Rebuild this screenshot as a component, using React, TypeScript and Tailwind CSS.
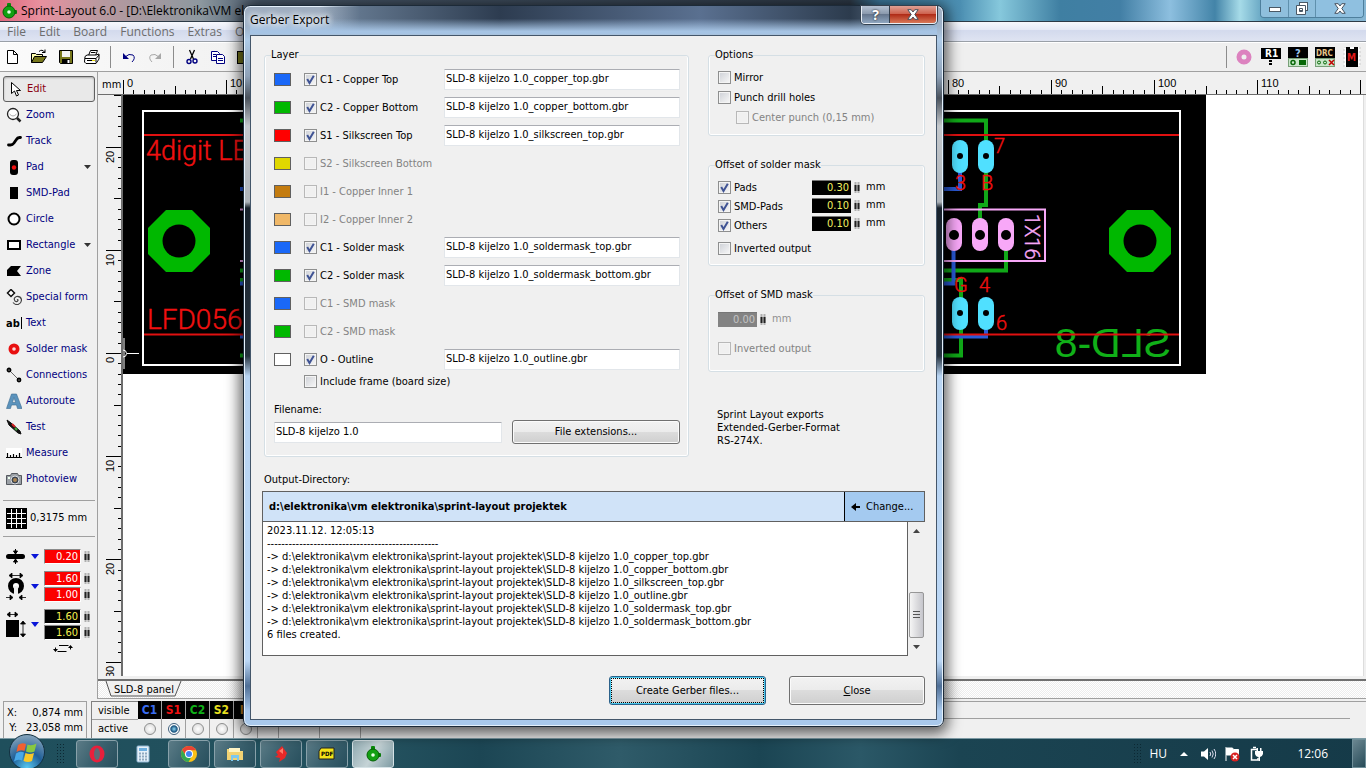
import type { ReactNode } from "react";

const UI = "font-['DejaVu_Sans_Condensed','DejaVu_Sans',sans-serif]";
const SEGOE = "font-['Open_Sans','Noto_Sans',sans-serif]";

function Icon({ children, size = 16, className = "" }: { children: ReactNode; size?: number; className?: string }) {
  return (
    <svg width={size} height={size} viewBox={`0 0 ${size} ${size}`} className={`shrink-0 ${className}`} aria-hidden="true">
      {children}
    </svg>
  );
}

function AppLogo() {
  return (
    <Icon>
      <rect x="6" y="0" width="4" height="5" rx="1" fill="#0a8a0a" />
      <rect x="11" y="7" width="5" height="4" rx="1" fill="#0a7a0a" />
      <circle cx="8" cy="9" r="6" fill="#12a012" stroke="#056105" />
      <circle cx="8" cy="9" r="1.8" fill="#e8ffe8" />
    </Icon>
  );
}

function TitleBar() {
  return (
    <header className="flex h-[22px] shrink-0 justify-between border-b border-[#2c3a46] bg-[linear-gradient(90deg,#e06a80_0,#e8909e_40px,#b9999f_100px,#8d989f_200px,#48586a_260px,#2e3a48_850px,#3c7a9e_880px,#4c8fb2_960px,#86c8dc_1000px,#3f7fa2_1060px,#427fa5_1120px,#8dbfdf_1170px,#4384a8_1215px,#a6dbe8_1240px,#5f9fbe_1265px,#86b6d3_1366px)]">
      <div className="flex items-center gap-1 pl-[1px]">
        <AppLogo />
        <h1 className={`text-[12px] leading-[18px] text-black ${SEGOE}`}>Sprint-Layout 6.0 - [D:\Elektronika\VM elektronika</h1>
      </div>
      <div className="mr-[2px] flex h-[18px] overflow-hidden rounded-b-[4px] border border-t-0 border-[#4e7f9d]">
        <button aria-label="Minimize" className="grid w-[28px] place-items-center border-r border-[#5f90ad] bg-[#8fbfdd]">
          <svg width="12" height="6"><rect x=".5" y="1.500" width="11" height="4" fill="#fff" stroke="#4a5865" /></svg>
        </button>
        <button aria-label="Restore" className="grid w-[27px] place-items-center border-r border-[#5f90ad] bg-[#8fbfdd]">
          <svg width="13" height="13" fill="#fff" stroke="#4a5865">
            <rect x="3.500" y=".5" width="8" height="8" />
            <path fillRule="evenodd" d="M.5 3.500h9v9h-9zM3.500 6.500v3h3v-3z" />
          </svg>
        </button>
        <button aria-label="Close window" className="grid w-[47px] place-items-center bg-[#8fc0e0]">
          <CrossGlyph />
        </button>
      </div>
    </header>
  );
}

function CrossGlyph() {
  return (
    <svg width="12" height="11" viewBox="0 0 12 11">
      <path d="M.8.700h3.400L6 3 7.800.700h3.400L7.800 5.500l3.400 4.800H7.800L6 8l-1.800 2.300H.8l3.400-4.800z" fill="#fff" stroke="#48525e" />
    </svg>
  );
}

function MenuBar() {
  return (
    <nav className={`flex h-[20px] shrink-0 items-center gap-[13px] border-b border-[#9aa0a8] bg-[linear-gradient(#f6f8fc,#e6eaf6_40%,#d3daed_45%,#dfe4f2)] pl-[7px] text-[12px] leading-4 text-[#6d6d6d] ${SEGOE}`}>
      {["File", "Edit", "Board", "Functions", "Extras", "Options", "Help"].map((m) => (
        <button key={m}>{m}</button>
      ))}
    </nav>
  );
}

function Toolbar() {
  return (
    <div className="flex h-[30px] shrink-0 items-center justify-between border-t border-b border-t-white border-b-[#a0a0a0] bg-[linear-gradient(90deg,#fbfbfb,#efefef_300px)] pr-[4px] pl-1">
      <div className="flex items-center gap-[10px]">
        <button aria-label="New"><Icon><path d="M3.500 1.500h6l4 4v9h-10zM9.500 1.500v4h4" fill="#fff" stroke="#000" /></Icon></button>
        <button aria-label="Open">
          <Icon size={18}><path d="M1.500 14.500v-9h4l1 1h6v2" fill="#ffffb0" stroke="#000" /><path d="M1.500 14.500l3-6h12l-4 6z" fill="#77771c" stroke="#000" /><path d="M9 3.500q3-3 6 1m0-3v3h-3" fill="none" stroke="#000" /></Icon>
        </button>
        <button aria-label="Save">
          <Icon><path d="M1.500 1.500h13v13h-12l-1-1z" fill="#77771c" stroke="#000" /><path d="M4 2h8v6H4z" fill="#f2f2f2" /><path d="M4 10h8v4H4z" fill="#000" /><path d="M9.500 11h2v3h-2z" fill="#fff" /></Icon>
        </button>
        <button aria-label="Print">
          <Icon><path d="M4.500 6.500l2-5h7l-2 5z" fill="#fff" stroke="#000" /><path d="M1 7.500l2-1.500h9l3-1v5l-3 4.500H2l-1.500-1.500z" fill="#fff" stroke="#000" /><path d="M1 9.500h11v4M12 9.500l3-3.500M7 3.500h4.500M3 11.500h8" fill="none" stroke="#000" /><path d="M8 11.500h3" stroke="#e4d60a" /></Icon>
        </button>
        <span className="h-[22px] w-px bg-[#8c8c8c]" />
        <button aria-label="Undo"><Icon><path d="M2 4v6h6z" fill="#000080" /><path d="M4 8q4-4 8-2 3 3-1 7" fill="none" stroke="#000080" /></Icon></button>
        <button aria-label="Redo"><Icon><path d="M14 4v6H8z" fill="#a8a8a8" /><path d="M12 8Q8 4 4 6q-3 3 1 7" fill="none" stroke="#a8a8a8" /></Icon></button>
        <span className="h-[22px] w-px bg-[#8c8c8c]" />
        <button aria-label="Cut"><Icon><path d="M5.500 1l4 9M10.500 1l-4 9" stroke="#000" strokeWidth="1.300" /><circle cx="5" cy="12.500" r="2" fill="none" stroke="#000080" strokeWidth="1.400" /><circle cx="11" cy="12" r="2" fill="none" stroke="#000080" strokeWidth="1.400" /></Icon></button>
        <button aria-label="Copy"><Icon><path d="M1.500 2.500h6l2 2v7h-8z" fill="#fff" stroke="#000080" /><path d="M6.500 5.500h6l2 2v7h-8z" fill="#fff" stroke="#000080" /><path d="M3 5.500h3M3 7.500h3M8 9.500h5M8 11.500h5" stroke="#000080" /></Icon></button>
        <button aria-label="Paste"><Icon><rect x="1.500" y="2.500" width="12" height="12" fill="#77771c" stroke="#000" /></Icon></button>
      </div>
      <div className="flex items-center gap-[7px]">
        <span className="h-[22px] w-px bg-[#8c8c8c]" />
        <button aria-label="Drill"><Icon size={20}><circle cx="10" cy="10" r="5" fill="none" stroke="#dc82bf" strokeWidth="5" /></Icon></button>
        <button aria-label="Component">
          <Icon size={20}><rect y="1" width="20" height="11" fill="#000" /><text x="4" y="10" fontSize="10" fontWeight="700" fontFamily="DejaVu Sans Condensed" fill="#fff">R1</text><path d="M8 13h3v2H8zM8 16h3v2H8z" fill="#000" /></Icon>
        </button>
        <button aria-label="Query">
          <Icon size={20}><rect y="0" width="20" height="11" fill="#000" /><text x="7" y="10" fontSize="11" fontWeight="700" fontFamily="DejaVu Sans Condensed" fill="#9cc8f0">?</text><rect x=".5" y="11.500" width="19" height="8" fill="#c9e6c9" stroke="#78a078" /><circle cx="5" cy="15.500" r="2" fill="none" stroke="#086808" strokeWidth="1.500" /><rect x="11" y="13" width="7" height="5" fill="#086808" /></Icon>
        </button>
        <button aria-label="Design rule check">
          <Icon size={20}><rect y="0" width="20" height="11" fill="#000" /><text x="1" y="9" fontSize="8" fontWeight="700" fontFamily="DejaVu Sans Condensed" fill="#e6c48a">DRC</text><rect x=".5" y="11.500" width="19" height="8" fill="#c9e6c9" stroke="#78a078" /><circle cx="4" cy="15.500" r="1.500" fill="none" stroke="#086808" /><circle cx="10" cy="15.500" r="1.500" fill="none" stroke="#086808" /><path d="M14 13l5 5M19 13l-5 5" stroke="#c00000" strokeWidth="1.500" /></Icon>
        </button>
        <button aria-label="Macro library">
          <Icon size={20}><rect x="2" y="0" width="16" height="20" fill="#fff" stroke="#ccc" strokeDasharray="2 2" /><rect x="4" y="0" width="12" height="20" fill="#000" /><path d="M8 0h4v2H8z" fill="#fff" /><text x="5" y="14" fontSize="10" fontWeight="700" fontFamily="DejaVu Sans Condensed" fill="#e01818">M</text></Icon>
        </button>
      </div>
    </div>
  );
}

const tools: { label: string; icon: ReactNode; menu?: boolean }[] = [
  { label: "Edit", icon: <path d="M4.500 1.500v11l3-2.500 2 5 2-1-2-4.500h4z" fill="#fff" stroke="#000" /> },
  { label: "Zoom", icon: <><circle cx="7" cy="7" r="5.500" fill="#fff" stroke="#222" strokeWidth="1.300" /><path d="M3.500 7q3.500 4 7 0" stroke="#aaa" fill="none" /><path d="M11 11l3.500 3.500" stroke="#222" strokeWidth="2.500" /></> },
  { label: "Track", icon: <path d="M2.500 12h2q2 0 3.500-2l2-3q1.500-2.500 3.500-2.500h1" fill="none" stroke="#000" strokeWidth="2.800" strokeLinecap="round" /> },
  { label: "Pad", icon: <><rect x="4" y="1" width="8" height="15" rx="3" fill="#000" /><circle cx="8" cy="8.500" r="2.200" fill="#f01010" /></>, menu: true },
  { label: "SMD-Pad", icon: <rect x="4" y="2" width="8" height="12" fill="#000" /> },
  { label: "Circle", icon: <circle cx="8" cy="8" r="5.500" fill="#fff" stroke="#000" strokeWidth="2" /> },
  { label: "Rectangle", icon: <rect x="2" y="4" width="12" height="8" fill="#fff" stroke="#000" strokeWidth="2" />, menu: true },
  { label: "Zone", icon: <path d="M1 7l4-4h10l-4 5 4 5H1z" fill="#000" /> },
  { label: "Special form", icon: <><path d="M5 .5l3.500 3.500L5 7.500 1.500 4z" fill="#fff" stroke="#111" strokeWidth="1.500" /><path d="M11 11q1-1 1 .5-1 2-3 .5-2-3 1.500-4.500 4-.5 5 3 0 4-3.500 5-3 .5-5-2" fill="none" stroke="#444" strokeWidth="1.200" /></> },
  { label: "Text", icon: <><text x="0" y="12" fontSize="11" fontWeight="700" fontFamily="DejaVu Sans Condensed">ab</text><path d="M15.500 2v12" stroke="#000" /></> },
  { label: "Solder mask", icon: <><circle cx="8" cy="8" r="5.500" fill="#e81010" /><circle cx="8" cy="8" r="1.800" fill="#ffd8d8" /></> },
  { label: "Connections", icon: <><path d="M3 3l10 10" stroke="#666" /><circle cx="3" cy="3" r="1.500" fill="#fff" stroke="#000" strokeWidth="1.800" /><circle cx="13" cy="13" r="1.500" fill="#fff" stroke="#000" strokeWidth="1.800" /></> },
  { label: "Autoroute", icon: <path fillRule="evenodd" d="M5.500 1h5L16 15.500h-4.500L10.500 12h-5l-1 3.500H.5zM8 4.500L6.500 9.500h3z" fill="#5b93bd" stroke="#3d6c91" strokeWidth=".6" /> },
  { label: "Test", icon: <><path d="M1 1l4 3 9 8 1 3-3-1-9-8z" fill="#111" stroke="#111" /><path d="M6 5l3 3" stroke="#d02020" strokeWidth="2" /><path d="M9 9l2 2" stroke="#40b040" strokeWidth="2" /></> },
  { label: "Measure", icon: <><rect y="3" width="16" height="9" fill="#fff" /><path d="M0 12.500h16M1.500 8v4M4.500 10v2M7.500 9v3M10.500 10v2M13.500 8v4" stroke="#000" strokeWidth="1.200" /></> },
  { label: "Photoview", icon: <><path d="M.5 4.500h4l1-2h6l1 2h3v9H.5z" fill="#9ba0a6" stroke="#55595f" /><circle cx="9" cy="9" r="4" fill="#3c4450" stroke="#d9dde2" /><circle cx="9" cy="9" r="2" fill="#a98553" /><rect x="2" y="6" width="2" height="2" fill="#efe" /></> },
];

function Spinner({ className = "" }: { className?: string }) {
  return (
    <svg width="6" height="11" className={`shrink-0 ${className}`} aria-hidden="true">
      <path d="M1.500 0v11M4.500 0v11" stroke="#b0b0b0" strokeWidth="2" />
      <path d="M1.500 3v6M4.500 3v6" stroke="#222" strokeWidth="2" />
    </svg>
  );
}

function SideValue({ value, label, red }: { value: string; label: string; red?: boolean }) {
  return (
    <div className="flex items-center gap-[3px]">
      <input
        aria-label={label}
        defaultValue={value}
        className={`h-[15px] w-[37px] border border-[#8a8a8a] border-b-white border-r-white pr-[2px] text-right text-[11px] leading-[13px] ${red ? "bg-[#fb0000] text-white" : "bg-black text-[#f4f050]"}`}
      />
      <Spinner />
    </div>
  );
}

function BlueArrow() {
  return <svg width="8" height="5" className="shrink-0"><path d="M0 0h8L4 5z" fill="#0a16d8" /></svg>;
}

function Sidebar() {
  return (
    <aside className={`flex w-[98px] shrink-0 flex-col border-r border-[#a0a0a0] pt-1 pr-[2px] pl-[3px] text-[11px] text-[#000080] ${UI}`}>
      {tools.map((t) => (
        <button
          key={t.label}
          className={`flex h-[26px] items-center gap-1 pl-[3px] whitespace-nowrap ${t.label === "Edit" ? "rounded-[3px] border border-[#606060] bg-[#e9e9e9] pl-[2px] text-[#8b0010] shadow-[inset_0_1px_2px_#aaa]" : ""}`}
        >
          <Icon>{t.icon}</Icon>
          <span className="flex-1 text-left">{t.label}</span>
          {t.menu && <svg width="7" height="4" className="mr-1"><path d="M0 0h7L3.500 4z" fill="#333" /></svg>}
        </button>
      ))}
      <hr className="mt-2 border-[#a0a0a0]" />
      <button className="flex h-[35px] items-center gap-[3px] pl-[3px] whitespace-nowrap text-black">
        <Icon size={21}><rect width="21" height="21" fill="#000" /><path d="M5.500 1v19M10.500 1v19M15.500 1v19M1 5.500h19M1 10.500h19M1 15.500h19" stroke="#fff" /></Icon>
        0,3175 mm
      </button>
      <hr className="border-[#a0a0a0]" />
      <div className="mt-3 flex items-center justify-between pr-[5px] pl-[3px]">
        <svg width="19" height="15"><rect y="5" width="19" height="5" rx="2.500" /><path d="M9.500 0v4M7.500 2h4l-2 3zM9.500 15v-4M7.500 13h4l-2-3z" stroke="#000" /></svg>
        <BlueArrow />
        <SideValue value="0.20" label="Track width" red />
      </div>
      <div className="mt-[7px] flex items-center justify-between pr-[5px] pl-[3px]">
        <svg width="20" height="27">
          <path d="M4 2.500h12M6 0v5L3 2.500zM14 0v5l3-2.500z" stroke="#000" strokeWidth=".8" />
          <circle cx="10" cy="13" r="5.500" fill="#fff" stroke="#000" strokeWidth="5" />
          <path d="M8 13h4v8H8z" fill="#f0f0f0" />
          <path d="M0 24.500h6M20 24.500h-6M4 22v5l3-2.500zM16 22v5l-3-2.500z" stroke="#000" strokeWidth=".8" />
        </svg>
        <BlueArrow />
        <div className="flex flex-col gap-px"><SideValue value="1.60" label="Pad outer" red /><SideValue value="1.00" label="Pad drill" red /></div>
      </div>
      <div className="mt-[7px] flex items-center justify-between pr-[5px] pl-[3px]">
        <svg width="20" height="27">
          <path d="M2 3.500h9M4 1v5L1 3.500zM9 1v5l3-2.500z" stroke="#000" strokeWidth=".8" />
          <rect y="9" width="13" height="17" />
          <path d="M17 11v14M14.500 13h5L17 10zM14.500 23h5L17 26z" stroke="#000" strokeWidth=".8" />
        </svg>
        <BlueArrow />
        <div className="flex flex-col gap-px"><SideValue value="1.60" label="SMD width" /><SideValue value="1.60" label="SMD height" /></div>
      </div>
      <svg width="20" height="9" className="mt-1 ml-[50px]"><path d="M6 1.500h9.500M2.500 7V3.500M4.500 7.500h9M17.500 2v3.500" fill="none" stroke="#000" /><path d="M0 5h5L2.500 8zM15 4h5L17.500 1z" /></svg>
    </aside>
  );
}

const MM = 10.31;

function TopRuler() {
  const count = Math.floor((window.innerWidth - 126) / MM) + 1;
  const ticks = Array.from({ length: count }, (_, i) => i);
  return (
    <svg height="22" className="w-0 min-w-0 flex-1" aria-hidden="true">
      {ticks.map((i) => {
        const x = Math.round(i * MM) + 0.5;
        return <path key={i} d={`M${x} ${i % 10 === 0 ? 8 : i % 5 === 0 ? 14 : 18}V22`} stroke="#000" />;
      })}
      {ticks.filter((i) => i % 10 === 0 && i < count - 2).map((i) => (
        <text key={i} x={Math.round(i * MM) + 4} y="15" fontSize="11" fontFamily="Liberation Sans">{i}</text>
      ))}
    </svg>
  );
}

function LeftRuler() {
  const zero = 258;
  const below = Math.floor((window.innerHeight - 443) / MM);
  const ticks = Array.from({ length: 25 + below }, (_, k) => k - 25);
  return (
    <svg width="25" className="shrink-0 self-stretch" height="100%" aria-hidden="true">
      {ticks.map((i) => {
        const y = Math.round(zero + i * MM) + 0.5;
        return <path key={i} d={`M${i % 10 === 0 ? 8 : i % 5 === 0 ? 16 : 20} ${y}H23`} stroke="#000" />;
      })}
      {ticks.filter((i) => i % 10 === 0).map((i) => (
        <text key={i} transform={`translate(16 ${Math.round(zero + i * MM) + (i === 0 ? 10 : 16)}) rotate(-90)`} fontSize="11" fontFamily="Liberation Sans">{Math.abs(i)}</text>
      ))}
      <path d="M24 0v2000" stroke="#6e6e6e" strokeWidth="2" />
    </svg>
  );
}

function Octagon({ x, y }: { x: number; y: number }) {
  return (
    <>
      <path transform={`translate(${x} ${y})`} d="M-13-31H13L31-13V13L13 31H-13L-31 13V-13z" fill="#00b800" />
      <circle cx={x} cy={y} r="16.500" fill="#000" />
    </>
  );
}

function Board() {
  const cyan = [[960, 156], [986, 156], [960, 313], [986, 313]];
  const marks: [string, number, number][] = [["7", 994, 153], ["3", 955, 190], ["B", 981, 190], ["G", 954, 292], ["4", 979, 292], ["6", 996, 330]];
  return (
    <svg className="block h-[560px] w-full" role="img" aria-label="Printed circuit board layout">
      <g transform="translate(-123 -95)">
        <rect x="123" y="95" width="1083" height="279" fill="#000" />
        <rect x="143" y="111" width="1037" height="254" fill="none" stroke="#fff" strokeWidth="2" />
        <g fill="none" strokeWidth="4">
          <g stroke="#10a818">
            <path d="M240 120.500H986V205H980V235M1006 235v35.500H240M240 280h721V355.500H240" />
          </g>
          <g stroke="#2a5ad8">
            <path d="M960 156v33H240M953.500 235v48.500H240M986 313v23.500H240" />
          </g>
        </g>
        <path d="M240 209.500H1045V261H240" fill="none" stroke="#f8a8f8" strokeWidth="2" />
        {cyan.map(([x, y]) => (
          <g key={`${x}-${y}`}><rect x={x - 8} y={y - 16} width="16" height="33" rx="8" fill="#50e0ff" /><circle cx={x} cy={y} r="3" /></g>
        ))}
        {[954, 980, 1006].map((x) => (
          <g key={x}><rect x={x - 8} y="218" width="16" height="33" rx="8" fill="#f8a8f8" /><circle cx={x} cy="235" r="5" /></g>
        ))}
        <Octagon x={179} y={241} />
        <Octagon x={1140} y={241} />
        <text transform="translate(1171 357) scale(-1 1)" fontFamily="Liberation Sans" fontSize="41" fill="#10b018">SLD-8</text>
        <path d="M144 135h1035M144 334.500h1035" stroke="#e01010" strokeWidth="2" />
        <g fontFamily="Roboto" fontWeight="300" fill="#f01010" stroke="#f01010" strokeWidth=".4" fontSize="20">
          {marks.map(([t, x, y]) => <text key={`${t}${x}`} x={x} y={y}>{t}</text>)}
          <text x="146" y="160" fontSize="27">4digit LED</text>
          <text x="147" y="329" fontSize="28">LFD056</text>
        </g>
        <text transform="translate(1025 214) rotate(90)" fontFamily="Roboto" fontWeight="300" fontSize="20" fill="#f8a8f8" stroke="#f8a8f8" strokeWidth=".4">1X16</text>
        <path d="M124 338v31M127 353.500h12" stroke="#fff" />
        <circle cx="123" cy="353.500" r="3.500" fill="none" stroke="#fff" />
      </g>
    </svg>
  );
}

function Workspace() {
  return (
    <main className="flex min-w-0 flex-1 flex-col">
      <div className="flex h-[23px] shrink-0 overflow-hidden border-b border-[#6e6e6e]">
        <span className={`w-[25px] shrink-0 pt-[6px] pl-1 text-[11px] leading-[13px] ${UI}`}>mm</span>
        <TopRuler />
      </div>
      <div className="flex flex-1">
        <LeftRuler />
        <div className="mr-[2px] min-w-0 flex-1 border-r border-[#ddd] bg-white"><Board /></div>
      </div>
      <div className="mt-[3px] flex h-[20px] shrink-0 border-t-2 border-b border-t-[#707070] border-b-[#a0a0a0] bg-[repeating-conic-gradient(#ffffff_0_25%,#ededed_0_50%)] bg-[length:2px_2px] pl-[7px]">
        <button className={`relative h-[17px] w-[78px] text-[11px] leading-[13px] ${UI}`}>
          <svg width="78" height="17" className="absolute inset-0"><path d="M1 0l5 15h64l6-15" fill="#f0f0f0" stroke="#555" /></svg>
          <span className="relative">SLD-8 panel</span>
        </button>
      </div>
    </main>
  );
}

const layers = [
  ["C1", "text-[#3a6cf0]"], ["S1", "text-[#f01010]"], ["C2", "text-[#10b018]"], ["S2", "text-[#e8e020]"], ["I1", "text-[#c08020]"],
];

function StatusBar() {
  return (
    <footer className={`flex h-[39px] shrink-0 gap-[4px] bg-[#f0f0f0] pt-[2px] pl-[3px] text-[11px] ${UI}`}>
      <dl className="grid w-[84px] grid-cols-[auto_1fr] content-center gap-y-[2px] border border-b-0 border-[#a0a0a0] px-[3px] text-right leading-[13px]">
        <dt>X:</dt><dd>0,874 mm</dd>
        <dt>Y:</dt><dd>23,058 mm</dd>
      </dl>
      <div className="flex min-w-0 flex-1">
        <div className="w-[47px] border-t border-l border-[#808080] leading-[17px]">
          <p className="border-b border-[#a0a0a0] pl-[6px]">visible</p>
          <p className="pl-[6px] leading-[18px]">active</p>
        </div>
        {layers.map(([name, color], i) => (
          <div key={name} className="w-6 border-r border-[#a0a0a0]">
            <button className={`block h-[18px] w-full bg-black text-[12px] font-bold ${color}`}>{name}</button>
            <label className="grid h-[19px] place-items-center">
              <input
                type="radio"
                name="active-layer"
                aria-label={`${name} active`}
                defaultChecked={i === 1}
                className="h-3 w-3 appearance-none rounded-full border border-[#8e8f8f] bg-[radial-gradient(#fff,#d4d4d4)] checked:border-[#3f5f7c] checked:bg-[radial-gradient(#8fd8f5_0,#16507c_45%,#fff_60%)]"
              />
            </label>
          </div>
        ))}
        <div className="flex flex-1 gap-10 border-t border-[#a0a0a0] pt-[16px] pl-5">
          <span className="w-px border-l border-[#a0a0a0]" /><span className="w-px border-l border-[#a0a0a0]" /><span className="w-px border-l border-[#a0a0a0]" />
          <span className="mr-4 flex-1 border-t border-[#a0a0a0]" />
        </div>
      </div>
    </footer>
  );
}

function TaskButton({ label, children, active, plain }: { label: string; children: ReactNode; active?: boolean; plain?: boolean }) {
  const look = plain
    ? "w-[42px]"
    : active
      ? "w-[42px] border border-[#d5e2e6] bg-[linear-gradient(120deg,#8fa9b0,#c5d3d6_50%,#7e9ba3)]"
      : "w-[42px] border border-[#88a1aa] bg-[linear-gradient(120deg,#5b7b86,#3d6370_45%,#284f5d)]";
  return <button aria-label={label} className={`grid h-[28px] place-items-center rounded-[3px] ${look}`}>{children}</button>;
}

function Taskbar() {
  return (
    <div className="flex h-[30px] shrink-0 items-center justify-between border-t border-[#7d9aa4] bg-[linear-gradient(90deg,#1f4f5c,#24525f_380px,#1c4654_480px,#2f5b69_620px,#1b4553_760px,#2b5867_860px,#1b4452_960px,#153a48_1366px)]">
      <div className="flex items-center gap-1">
        <button aria-label="Start" className="mr-[6px] ml-[8px] h-[30px] w-[38px]">
          <svg width="38" height="36" viewBox="0 0 38 36" className="-mt-[5px]">
            <defs>
              <radialGradient id="orb" cx=".5" cy=".95" r=".9"><stop offset="0" stopColor="#58c8f0" /><stop offset=".5" stopColor="#1f5f98" /><stop offset="1" stopColor="#7f9fb8" /></radialGradient>
            </defs>
            <circle cx="19" cy="18" r="17.500" fill="url(#orb)" stroke="#12303f" />
            <path d="M10 11q4-3 8-1l-1.500 7q-4-2-8 1z" fill="#f06030" />
            <path d="M19.500 10.500q4 2 9-1l-2 8q-4 2-8.500 0z" fill="#88c840" />
            <path d="M8 19.500q4-3 8-1l-2 8q-4-2-8 1z" fill="#48a8e8" />
            <path d="M17.500 19q4 2 8.500 0l-2 8q-4 2-8.500 0z" fill="#f8c828" />
          </svg>
        </button>
        <Grip />
        <span className="w-1" />
        <TaskButton label="Opera"><Icon size={20}><ellipse cx="10" cy="10" rx="7.500" ry="8.500" fill="#e8203c" /><ellipse cx="10" cy="10" rx="3" ry="6" fill="#5b6b76" /></Icon></TaskButton>
        <TaskButton label="Calculator" plain><Icon size={18}><rect x="3" y="1" width="12" height="16" rx="1" fill="#e6f1f9" stroke="#8fb6d4" /><rect x="5" y="3" width="8" height="3" fill="#6fb0e0" /><path d="M5 8.500h8M5 11.500h8M5 14.500h8" stroke="#8fa9c0" strokeWidth="2" strokeDasharray="2 1" /></Icon></TaskButton>
        <TaskButton label="Chrome">
          <Icon size={18}><circle cx="9" cy="9" r="8" fill="#fbc116" /><path d="M2.100 5A8 8 0 0 1 16 5.200H9L6 10.500z" fill="#ea4335" /><path d="M2.100 5A8 8 0 0 0 8.500 17L12 11H6z" fill="#34a853" /><circle cx="9" cy="9" r="4" fill="#fff" /><circle cx="9" cy="9" r="3" fill="#4285f4" /></Icon>
        </TaskButton>
        <TaskButton label="Explorer"><Icon size={18}><path d="M1 4h6l1 2h9v9H1z" fill="#f4d87a" /><path d="M3 3h11v5H3z" fill="#fdf4c4" /><path d="M1 7h16v8H1z" fill="#f2d273" /><path d="M5 16v-6h8v6h-2v-3H7v3z" fill="#7cc8f0" /></Icon></TaskButton>
        <TaskButton label="PDF converter"><Icon size={18}><path d="M4 7l6-6 2 3 3 4-2 5-6 4 1-4-5-1 3-2z" fill="#e82828" /><path d="M7 6l4-3v6z" fill="#ff7a6a" /></Icon></TaskButton>
        <TaskButton label="PDF printer"><Icon size={18}><path d="M3 3h13v11H1V6z" fill="#f4e418" stroke="#222" /><text x="3" y="11" fontSize="6" fontWeight="700" fontFamily="DejaVu Sans Condensed">PDF</text></Icon></TaskButton>
        <TaskButton label="Sprint-Layout" active><AppLogo /></TaskButton>
      </div>
      <div className={`flex h-full items-center text-[12px] text-white ${SEGOE}`}>
        <Grip />
        <span className="ml-2 w-[23px]">HU</span>
        <svg width="8" height="4" className="ml-2"><path d="M0 4h8L4 0z" fill="#fff" /></svg>
        <Icon className="ml-3"><path d="M1 5.500h3L8 2v12l-4-3.500H1z" fill="#fff" /><path d="M10 6q1.500 2 0 4M12 4.500q2.500 3.500 0 7M14 3q3.500 5 0 10" fill="none" stroke="#dde" /></Icon>
        <Icon className="ml-2"><path d="M2 1v14M2.500 2h6l1 1.500h5V10H8L7 9H2.500z" fill="#fff" stroke="#fff" /><circle cx="11" cy="11" r="4.500" fill="#d82020" /><path d="M9 9l4 4M13 9l-4 4" stroke="#fff" strokeWidth="1.500" /></Icon>
        <Icon className="ml-2"><path d="M9 3.500H3.500v10.500H10V12M5 1.500h3" fill="none" stroke="#fff" strokeWidth="1.500" /><path d="M7 5h8v3q-1 3-3 3v4h-1.500v-4Q8 11 7 8zM8.500 2H10v3H8.500zM12 2h1.500v3H12z" fill="#fff" /></Icon>
        <time className="mr-6 ml-[33px]">12:06</time>
        <button aria-label="Show desktop" className="h-full w-[14px] border border-[#6f8f99] bg-[linear-gradient(135deg,#6b8791,#274b58)]" />
      </div>
    </div>
  );
}

function Grip() {
  return <span className="h-[22px] w-2 bg-[radial-gradient(circle,#0c2833_1px,transparent_1px)] bg-[length:3px_3px]" />;
}

function Check({ label, checked, disabled, id }: { label: string; checked?: boolean; disabled?: boolean; id: string }) {
  return (
    <div className="flex h-4 items-center gap-[3px] whitespace-nowrap">
      <span className="relative grid h-[13px] w-[13px] shrink-0">
        <input
          id={id}
          type="checkbox"
          defaultChecked={checked}
          disabled={disabled}
          className="peer h-[13px] w-[13px] appearance-none border border-[#8e8f8f] bg-[linear-gradient(135deg,#cdd0d6,#f8f8f8)] shadow-[inset_0_0_0_1px_#f4f4f4] disabled:border-[#b8b8b8] disabled:bg-none"
        />
        <svg viewBox="0 0 13 13" className="pointer-events-none absolute inset-0 hidden peer-checked:block"><path d="M3.200 6l2.300 4L9.800 2.800" fill="none" stroke="#3f5394" strokeWidth="2" /></svg>
      </span>
      <label htmlFor={id} className={disabled ? "pt-[2px] text-[#838383]" : "pt-[2px]"}>{label}</label>
    </div>
  );
}

function Group({ title, className = "", children }: { title: string; className?: string; children: ReactNode }) {
  return (
    <fieldset className={`min-w-0 rounded-[3px] border border-[#d5dfe5] shadow-[inset_1px_0_0_#fff,inset_-1px_0_0_#fff,inset_0_-1px_0_#fff] ${className}`}>
      <legend className="-ml-[3px] leading-[14px]">{title}</legend>
      {children}
    </fieldset>
  );
}

const rows: { id: string; color: string; label: string; file?: string }[] = [
  { id: "c1", color: "bg-[#1a68f8]", label: "C1 - Copper Top", file: "copper_top" },
  { id: "c2", color: "bg-[#00b800]", label: "C2 - Copper Bottom", file: "copper_bottom" },
  { id: "s1", color: "bg-[#ff0000]", label: "S1 - Silkscreen Top", file: "silkscreen_top" },
  { id: "s2", color: "bg-[#e0d800]", label: "S2 - Silkscreen Bottom" },
  { id: "i1", color: "bg-[#c47c10]", label: "I1 - Copper Inner 1" },
  { id: "i2", color: "bg-[#f0b868]", label: "I2 - Copper Inner 2" },
  { id: "m1", color: "bg-[#1a68f8]", label: "C1 - Solder mask", file: "soldermask_top" },
  { id: "m2", color: "bg-[#00b800]", label: "C2 - Solder mask", file: "soldermask_bottom" },
  { id: "d1", color: "bg-[#1a68f8]", label: "C1 - SMD mask" },
  { id: "d2", color: "bg-[#00b800]", label: "C2 - SMD mask" },
  { id: "o", color: "bg-white", label: "O - Outline", file: "outline" },
];

const FIELD = "h-[21px] min-w-0 rounded-[1px] border border-[#e2e6ea] border-t-[#abadb3] bg-white pl-px pb-px";
const BUTTON = "rounded-[3px] border border-[#707070] bg-[linear-gradient(#f2f2f2,#ebebeb_50%,#dcdcdc_50%,#cfcfcf)] shadow-[inset_0_0_0_1px_#fbfbfb]";

function LayerGroup() {
  return (
    <Group title="Layer" className="w-[425px] pr-[8px] pb-[12px] pl-[9px]">
      <div className="mt-[3px]">
        {rows.map((r) => (
          <div key={r.id} className="flex h-[28px] items-center">
            <span className={`mr-[13px] h-[13px] w-[17px] border border-[#606060] ${r.color}`} />
            <div className="w-[140px]"><Check id={r.id} label={r.label} checked={!!r.file} disabled={!r.file} /></div>
            {r.file && <input aria-label={`${r.label} file`} defaultValue={`SLD-8 kijelzo 1.0_${r.file}.gbr`} className={`flex-1 ${FIELD}`} />}
          </div>
        ))}
      </div>
      <div className="pl-[30px]"><Check id="frame" label="Include frame (board size)" /></div>
      <label htmlFor="filename" className="mt-[14px] block leading-[14px]">Filename:</label>
      <div className="mt-[3px] flex items-center gap-[10px]">
        <input id="filename" defaultValue="SLD-8 kijelzo 1.0" className={`w-[228px] ${FIELD}`} />
        <button className={`h-[24px] flex-1 ${BUTTON}`}>File extensions...</button>
      </div>
    </Group>
  );
}

function Offset({ value, label, disabled }: { value: string; label: string; disabled?: boolean }) {
  return (
    <div className="flex h-[18px] items-center">
      <input
        aria-label={label}
        defaultValue={value}
        disabled={disabled}
        className={`h-[15px] w-[39px] border-t border-[#777] pr-[2px] text-right ${disabled ? "bg-[#838383] text-[#c4c4c4]" : "bg-black text-[#f0f060]"}`}
      />
      <Spinner className="mr-[6px] ml-[3px]" />
      <span className={disabled ? "text-[#909090]" : ""}>mm</span>
    </div>
  );
}

function OptionGroups() {
  return (
    <div className="w-[217px]">
      <Group title="Options" className="h-[88px] pl-[9px]">
        <div className="mt-[7px] flex flex-col gap-1">
          <Check id="mirror" label="Mirror" />
          <Check id="punch" label="Punch drill holes" />
          <div className="pl-[18px]"><Check id="center" label="Center punch (0,15 mm)" disabled /></div>
        </div>
      </Group>
      <Group title="Offset of solder mask" className="mt-[22px] h-[108px] pl-[9px]">
        <div className="mt-[6px] flex">
          <div className="flex w-[94px] flex-col gap-[3px] pt-[1px]">
            <Check id="pads" label="Pads" checked />
            <Check id="smdpads" label="SMD-Pads" checked />
            <Check id="others" label="Others" checked />
          </div>
          <div>
            <Offset value="0.30" label="Pads offset" />
            <Offset value="0.10" label="SMD-Pads offset" />
            <Offset value="0.10" label="Others offset" />
          </div>
        </div>
        <div className="mt-[7px]"><Check id="inv1" label="Inverted output" /></div>
      </Group>
      <Group title="Offset of SMD mask" className="mt-[22px] h-[84px] pl-[9px]">
        <div className="mt-2 mb-3"><Offset value="0.00" label="SMD mask offset" disabled /></div>
        <Check id="inv2" label="Inverted output" disabled />
      </Group>
      <p className="mt-[36px] pl-[9px] leading-[13px]">Sprint Layout exports<br />Extended-Gerber-Format<br />RS-274X.</p>
    </div>
  );
}

const DIR = "d:\\elektronika\\vm elektronika\\sprint-layout projektek";
const log = [
  "2023.11.12. 12:05:13",
  "-".repeat(48),
  ...["copper_top", "copper_bottom", "silkscreen_top", "outline", "soldermask_top", "soldermask_bottom"].map((f) => `-> ${DIR}\\SLD-8 kijelzo 1.0_${f}.gbr`),
  "6 files created.",
].join("\n");

function Output() {
  return (
    <section className="mt-[16px]">
      <h3 className="pl-[2px] leading-[14px]">Output-Directory:</h3>
      <div className="mt-1 flex h-[31px] border border-[#606060] bg-[#d0e3f8]">
        <p className="flex flex-1 items-center pl-[6px] font-bold">{DIR}</p>
        <button className="flex w-[80px] items-center gap-[6px] border-l border-black bg-[#a4caf0] pl-[6px]">
          <svg width="9" height="8"><path d="M5 0v8L0 4z" /><path d="M4 4h5" stroke="#000" strokeWidth="2" /></svg>
          Change...
        </button>
      </div>
      <div className="flex h-[134px]">
        <textarea readOnly aria-label="Export log" value={log} className="flex-1 resize-none overflow-hidden border border-t-0 border-[#606060] bg-white px-1 py-[2px] leading-[13px] whitespace-pre" />
        <div className="flex w-[17px] flex-col items-center bg-[#f0f0f0] py-[7px]" aria-hidden="true">
          <svg width="7" height="4"><path d="M0 4h7L3.500 0z" fill="#444" /></svg>
          <div className="mt-auto mb-[7px] grid h-[46px] w-[15px] place-items-center rounded-[2px] border border-[#979797] bg-[linear-gradient(90deg,#f5f5f5,#d8d8db_60%,#c6c6cc)]">
            <svg width="7" height="8"><path d="M0 .5h7M0 3.500h7M0 6.500h7" stroke="#555" /></svg>
          </div>
          <svg width="7" height="4"><path d="M0 0h7L3.500 4z" fill="#444" /></svg>
        </div>
      </div>
    </section>
  );
}

function Dialog() {
  return (
    <div
      role="dialog"
      aria-label="Gerber Export"
      className="absolute top-[5px] left-[243px] w-[701px] rounded-[7px] border border-[#1c2a38] bg-[linear-gradient(#a0aebf_0,#9fb2c8_20px,#aecbe8_34px,#8fa2b8_70px,#4a525c_92px,#c4c8cc_120px,#aeb4ba_196px,#18222c_202px,#26323e_350px,#b8d4f2_370px,#bcd8f6_655px,#4f6f96_680px,#a9c9ec_705px)] px-[6px] pb-[6px] shadow-[inset_0_0_0_1px_#e4f0fb,0_3px_14px_4px_rgba(0,0,0,0.6)]"
    >
      <div className="flex h-[28px] justify-between rounded-t-[6px] bg-[linear-gradient(transparent_45%,#a6c4e4_90%),linear-gradient(90deg,transparent_70px,#61758c_110px,#2d3c50_250px,#5a7090_450px,#2c3b4d_600px,#8ba3ba)]">
        <h2 className={`text-[12px] leading-[28px] text-black [text-shadow:0_0_6px_#fff,0_0_6px_#fff,0_0_8px_#fff] ${SEGOE}`}>Gerber Export</h2>
        <div className="flex h-[18px] overflow-hidden rounded-b-[4px] border border-t-0 border-[#e8eef5] shadow-[0_0_0_1px_#33404e]">
          <button aria-label="Help" className="w-[28px] border-r border-[#33404e] bg-[linear-gradient(#b4c2d2,#8796aa_50%,#66778e_50%,#8fa6c0)] text-[14px] leading-[16px] font-bold text-white [text-shadow:0_0_2px_#000]">?</button>
          <button aria-label="Close dialog" className="grid w-[46px] place-items-center bg-[linear-gradient(#e0a094,#cc5c48_50%,#b02c18_50%,#d87858)]"><CrossGlyph /></button>
        </div>
      </div>
      <div className={`mt-px border border-[#44566a] bg-[#f0f0f0] px-[11px] pt-[12px] pb-[14px] text-[11px] leading-[14px] text-black ${UI}`}>
        <div className="flex gap-[19px] pl-[2px]"><LayerGroup /><OptionGroups /></div>
        <Output />
        <div className="mt-[20px] flex justify-end gap-[23px]">
          <button className="h-[29px] w-[157px] rounded-[3px] border border-[#2c628b] bg-[linear-gradient(#f2f2f2,#ebebeb_50%,#dcdcdc_50%,#cfcfcf)] p-px shadow-[inset_0_0_0_1px_#48c8ec]">
            <span className="grid h-full place-items-center border border-dotted border-black">Create Gerber files...</span>
          </button>
          <button className={`h-[29px] w-[136px] ${BUTTON}`}><u>C</u>lose</button>
        </div>
      </div>
    </div>
  );
}

export default function App() {
  return (
    <div className="relative flex min-h-screen flex-col overflow-hidden bg-[#f0f0f0] text-black">
      <TitleBar />
      <MenuBar />
      <Toolbar />
      <div className="flex flex-1"><Sidebar /><Workspace /></div>
      <StatusBar />
      <Taskbar />
      <Dialog />
    </div>
  );
}
